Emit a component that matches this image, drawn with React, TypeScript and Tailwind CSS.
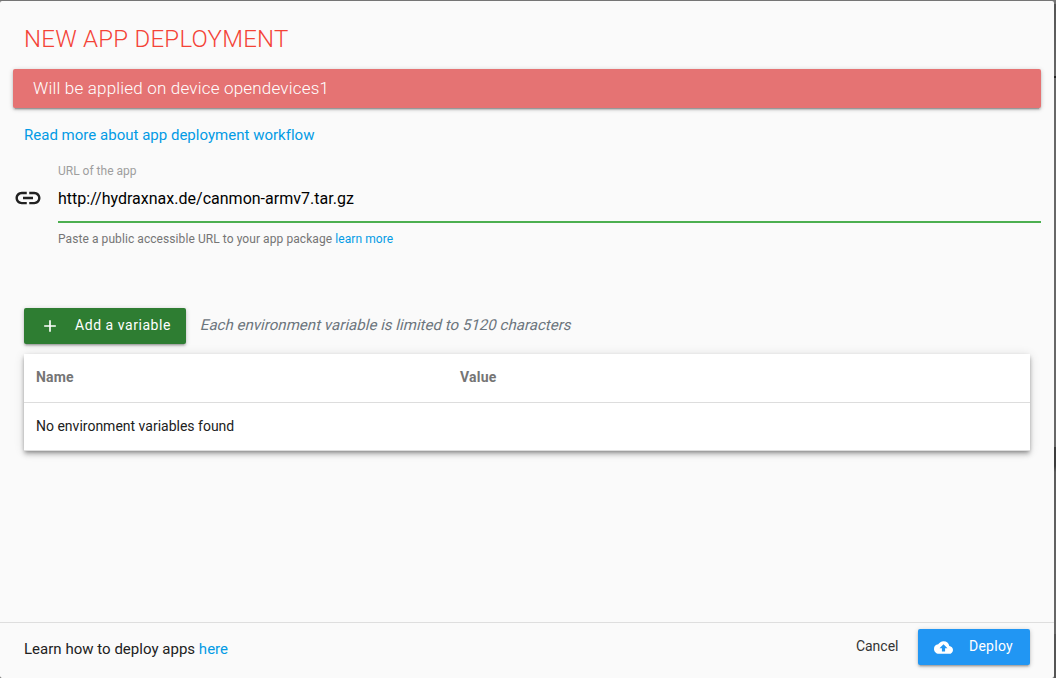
import React from "react";
import { MdLink, MdAdd, MdBackup } from "react-icons/md";

function Header() {
  return (
    <header>
      <h1 className="h-[68px] pl-6 pt-[20px] text-[24px] leading-9 font-light tracking-[0.25px] text-[#f44336]">NEW APP DEPLOYMENT</h1>
      <div className="mr-[13px] ml-[13px] h-[39px] rounded-[2px] bg-[#e57373] pl-5 text-[17px] leading-[39px] font-light tracking-[0.19px] text-white shadow-[0_2px_2px_0_rgba(0,0,0,0.14),0_3px_1px_-2px_rgba(0,0,0,0.2),0_1px_5px_0_rgba(0,0,0,0.2)]">
        Will be applied on device opendevices1
      </div>
    </header>
  );
}

export default function App() {
  return (
    <div className="flex h-[678px] w-[1056px] bg-[linear-gradient(to_bottom,#757575_0px,#757575_4px,#555_4px,#686868_76px,#222_76px,#222_78px,#686868_78px,#686868_447px,#3c3c3c_447px,#3c3c3c_466px,#5c5c5c_472px,#686868_634px,#555_634px)] pt-px font-['Roboto',sans-serif] text-[#212121]">
      <main className="flex w-[1054px] flex-col overflow-hidden rounded-[2px] bg-[#fafafa]">
        <Header />
        <a className="mt-[16px] ml-6 self-start text-[15px] leading-[23px] tracking-[0.015px] text-[#039be5]">Read more about app deployment workflow</a>
        <section className="mt-[16px] mr-[13px] flex pl-[13px]">
          <MdLink className="mt-[20px] mr-[15px] size-[30px] shrink-0" />
          <div className="flex-1">
            <div className="h-4 text-[12px] leading-4 text-[#9e9e9e]">URL of the app</div>
            <div className="h-[44px] border-b-2 border-[#4caf50] pt-[8px] text-[16px] leading-6 tracking-[0.01px] text-black">http://hydraxnax.de/canmon-armv7.tar.gz</div>
            <p className="mt-[8px] text-[12px] leading-4 tracking-[0.075px] text-[#757575]">Paste a public accessible URL to your app package <a className="text-[#039be5]">learn more</a></p>
          </div>
        </section>
        <section className="mt-[61px] ml-6 flex items-center">
          <button className="flex h-9 w-[162px] items-center rounded-[2px] bg-[#2e7d32] pl-4 text-[14px] tracking-[0.55px] text-white shadow-[0_2px_2px_0_rgba(0,0,0,0.14),0_3px_1px_-2px_rgba(0,0,0,0.12),0_1px_5px_0_rgba(0,0,0,0.2)]">
            <MdAdd className="mr-[15px] size-5" /><span className="mb-0.5">Add a variable</span>
          </button>
          <span className="mb-0.5 ml-[15px] -skew-x-[14deg] text-[15px] tracking-[0.035px] text-[#6c757d]">Each environment variable is limited to 5120 characters</span>
        </section>
        <table className="mt-[10px] ml-6 w-[1006px] table-fixed bg-white text-left text-[14px] shadow-[0_2px_4px_-1px_rgba(0,0,0,0.35),0_4px_5px_0_rgba(0,0,0,0.14),0_1px_10px_0_rgba(0,0,0,0.12)]">
          <thead className="text-[#757575]"><tr className="h-[48px] border-b border-[#ddd]"><th className="w-[424px] px-3 tracking-[0.15px]">Name</th><th className="px-3 tracking-[0.2px]">Value</th></tr></thead>
          <tbody><tr className="h-12 border-b border-[#ddd]"><td className="px-3" colSpan={2}>No environment variables found</td></tr></tbody>
        </table>
        <footer className="mt-auto flex h-14 items-center border-t border-[#dedede] pr-6 pl-6 text-[15px]">
          <span className="mt-[-3px] tracking-[0.02px]">Learn how to deploy apps <a className="text-[#039be5]">here</a></span>
          <span className="mt-[-9px] mr-[19.5px] ml-auto text-[14px] text-[#343434]">Cancel</span>
          <button className="mt-[-7px] flex h-9 w-[112px] items-center rounded-[2px] bg-[#2196f3] pl-4 text-[14px] tracking-[0.25px] text-white shadow-[0_2px_2px_0_rgba(0,0,0,0.14),0_3px_1px_-2px_rgba(0,0,0,0.12),0_1px_5px_0_rgba(0,0,0,0.2)]">
            <MdBackup className="mr-[16px] size-[19px]" /><span className="mb-0.5">Deploy</span>
          </button>
        </footer>
      </main>
    </div>
  );
}
